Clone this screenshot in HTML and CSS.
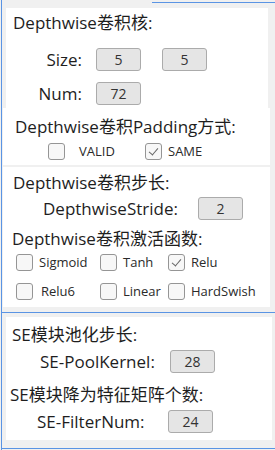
FILE: index.html
```html
<!DOCTYPE html>
<html lang="en">
<head>
    <meta charset="UTF-8">
    <meta name="viewport" content="width=device-width, initial-scale=1.0">
    <title>Depthwise Settings</title>
    <link rel="stylesheet" href="styles.css">
</head>
<body>

    <div class="frame">
        <div class="top-line"></div>

        <div class="panel kernel">
            <div class="title">Depthwise卷积核:</div>
            <div class="row size-row">
                <span class="label right">Size:</span>
                <span class="box">5</span>
                <span class="box second">5</span>
            </div>
            <div class="row num-row">
                <span class="label right">Num:</span>
                <span class="box">72</span>
            </div>
        </div>

        <div class="panel padding">
            <div class="title">Depthwise卷积Padding方式:</div>
            <div class="checks pad-checks">
                <span class="check"><span class="cb"></span><span class="cb-text valid">VALID</span></span>
                <span class="check"><span class="cb checked"></span><span class="cb-text">SAME</span></span>
            </div>
        </div>

        <div class="panel stride">
            <div class="title">Depthwise卷积步长:</div>
            <div class="row stride-row">
                <span class="label">DepthwiseStride:</span>
                <span class="box">2</span>
            </div>
            <div class="title act-title">Depthwise卷积激活函数:</div>
            <div class="act-grid">
                <span class="check"><span class="cb"></span><span class="cb-text">Sigmoid</span></span>
                <span class="check"><span class="cb"></span><span class="cb-text">Tanh</span></span>
                <span class="check"><span class="cb checked"></span><span class="cb-text">Relu</span></span>
                <span class="check"><span class="cb"></span><span class="cb-text shift">Relu6</span></span>
                <span class="check"><span class="cb"></span><span class="cb-text">Linear</span></span>
                <span class="check"><span class="cb"></span><span class="cb-text">HardSwish</span></span>
            </div>
        </div>

        <div class="mid-line"></div>

        <div class="panel se">
            <div class="title">SE模块池化步长:</div>
            <div class="row pool-row">
                <span class="label">SE-PoolKernel:</span>
                <span class="box">28</span>
            </div>
            <div class="title se-title2">SE模块降为特征矩阵个数:</div>
            <div class="row filter-row">
                <span class="label">SE-FilterNum:</span>
                <span class="box">24</span>
            </div>
        </div>

        <div class="bottom-line"></div>
    </div>

</body>
</html>
```

FILE: styles.css
```css
body {
    margin: 0;
    padding: 0;
    background-color: #f0f0f0;
    font-family: "Open Sans", "Noto Sans CJK SC", sans-serif;
    color: #1e1e1e;
}
.frame {
    margin-left: 1px;
    border-left: 1px solid #5a94e4;
    height: 450px;
    display: flex;
    flex-direction: column;
}
.top-line {
    height: 1px;
    margin-top: 2px;
    margin-left: 150px;
    background: #5a94e4;
}
.mid-line {
    height: 1px;
    margin-top: 5px;
    background: #5a94e4;
}
.bottom-line {
    height: 1px;
    margin-top: 8px;
    background: #5a94e4;
}
.panel {
    background: white;
    display: flex;
    flex-direction: column;
}
.title {
    font-size: 17px;
    line-height: 20px;
    white-space: nowrap;
}
.row {
    display: flex;
    align-items: center;
    height: 23px;
}
.label {
    font-size: 17px;
    line-height: 20px;
    white-space: nowrap;
    flex: none;
}
.label.right {
    text-align: right;
}
.box {
    flex: none;
    box-sizing: border-box;
    width: 45px;
    height: 23px;
    background: #e5e5e5;
    border: 1px solid #ababab;
    border-radius: 3px;
    font-size: 14px;
    line-height: 21px;
    text-align: center;
    color: #333;
}

/* kernel panel */
.kernel {
    margin: 5px 0 0 4px;
    width: 262px;
    height: 100px;
    box-sizing: border-box;
    padding: 5px 0 0 7px;
}
.size-row {
    margin-top: 15px;
}
.num-row {
    margin-top: 11px;
}
.kernel .label {
    width: 69px;
    margin-right: 14px;
}
.box.second {
    margin-left: 21px;
}

/* padding panel */
.padding {
    margin-left: 1px;
    width: 267px;
    height: 57px;
    box-sizing: border-box;
    padding: 9px 0 0 12px;
}
.checks {
    display: flex;
    margin-top: 6px;
}
.check {
    display: flex;
    align-items: center;
    height: 17px;
    white-space: nowrap;
}
.cb {
    flex: none;
    box-sizing: border-box;
    width: 17px;
    height: 17px;
    border: 1px solid #959595;
    border-radius: 3px;
    background: #f7f7f7;
    position: relative;
}
.cb.checked::after {
    content: "";
    position: absolute;
    left: 5px;
    top: 2px;
    width: 4px;
    height: 8px;
    border-right: 1px solid #666;
    border-bottom: 1px solid #666;
    transform: rotate(40deg);
}
.cb-text {
    font-size: 13px;
    line-height: 17px;
    color: #2a2a2a;
    margin-left: 6px;
}
.pad-checks {
    padding-left: 33px;
}
.pad-checks .check:first-child {
    width: 97px;
}
.cb-text.valid {
    margin-left: 14px;
}

/* stride panel */
.stride {
    margin: 2px 0 0 1px;
    width: 267px;
    height: 140px;
    box-sizing: border-box;
    padding: 6px 0 0 10px;
}
.stride-row {
    margin-top: 4px;
    padding-left: 30px;
}
.stride-row .label {
    width: 155px;
}
.act-title {
    margin-top: 9px;
    padding-left: 0;
    margin-left: -1px;
}
.act-grid {
    display: grid;
    grid-template-columns: 84px 68px 1fr;
    row-gap: 12px;
    margin-top: 5px;
    padding-left: 3px;
}
.cb-text.shift {
    margin-left: 8px;
}

/* se panel */
.se {
    margin: 4px 0 0 4px;
    width: 266px;
    height: 123px;
    box-sizing: border-box;
    padding: 8px 0 0 6px;
}
.pool-row {
    margin-top: 5px;
    padding-left: 28px;
}
.pool-row .label {
    width: 130px;
}
.se-title2 {
    margin-top: 12px;
    margin-left: -2px;
}
.filter-row {
    margin-top: 5px;
    padding-left: 25px;
}
.filter-row .label {
    width: 131px;
}
```
